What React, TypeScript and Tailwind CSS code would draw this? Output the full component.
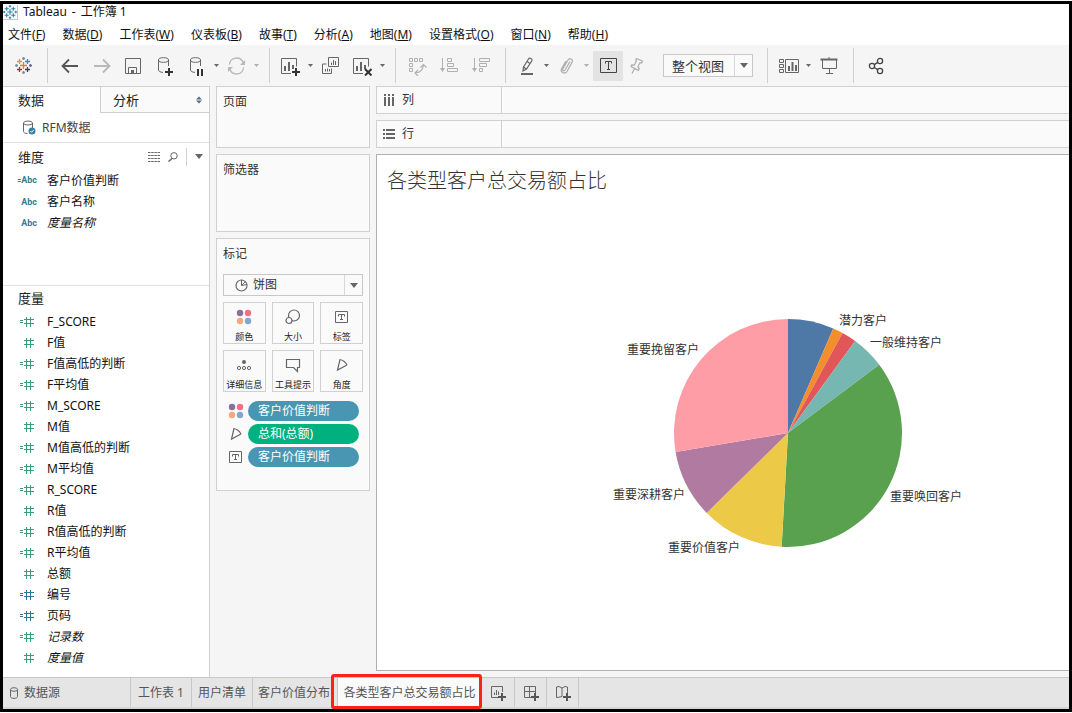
import type { ReactNode } from "react";

const dimensions = [
  { name: "客户价值判断", calculated: true },
  { name: "客户名称" },
  { name: "度量名称", italic: true },
];

const measures = [
  { name: "F_SCORE", calculated: true },
  { name: "F值" },
  { name: "F值高低的判断", calculated: true },
  { name: "F平均值", calculated: true },
  { name: "M_SCORE", calculated: true },
  { name: "M值" },
  { name: "M值高低的判断", calculated: true },
  { name: "M平均值", calculated: true },
  { name: "R_SCORE", calculated: true },
  { name: "R值" },
  { name: "R值高低的判断", calculated: true },
  { name: "R平均值", calculated: true },
  { name: "总额" },
  { name: "编号", calculated: true, discrete: true },
  { name: "页码", calculated: true, discrete: true },
  { name: "记录数", calculated: true, italic: true },
  { name: "度量值", italic: true },
];

const menus = [
  ["文件", "F"],
  ["数据", "D"],
  ["工作表", "W"],
  ["仪表板", "B"],
  ["故事", "T"],
  ["分析", "A"],
  ["地图", "M"],
  ["设置格式", "O"],
  ["窗口", "N"],
  ["帮助", "H"],
];

// start and end are degrees, clockwise from twelve o'clock
const slices = [
  { start: 0, end: 23.4, color: "#4e79a7" },
  { start: 23.4, end: 28.6, color: "#f28e2b" },
  { start: 28.6, end: 36.1, color: "#e15759" },
  { start: 36.1, end: 53.2, color: "#76b7b2" },
  { start: 53.2, end: 183.2, color: "#59a14f" },
  { start: 183.2, end: 225.5, color: "#edc948" },
  { start: 225.5, end: 260.4, color: "#b07aa1" },
  { start: 260.4, end: 360, color: "#ff9da7" },
];

const pieLabels = [
  { text: "潜力客户", x: 231, y: 22 },
  { text: "一般维持客户", x: 262, y: 44 },
  { text: "重要唤回客户", x: 282, y: 198 },
  { text: "重要价值客户", x: 60, y: 249 },
  { text: "重要深耕客户", x: 5, y: 196 },
  { text: "重要挽留客户", x: 19, y: 51 },
];

function slicePath(start: number, end: number) {
  const cx = 180;
  const cy = 130;
  const r = 114;
  const point = (deg: number) => {
    const rad = (deg * Math.PI) / 180;
    return `${cx + r * Math.sin(rad)} ${cy - r * Math.cos(rad)}`;
  };
  const large = end - start > 180 ? 1 : 0;
  return `M${cx} ${cy}L${point(start)}A${r} ${r} 0 ${large} 1 ${point(end)}Z`;
}

function PieChart() {
  return (
    <svg width="360" height="260" viewBox="0 0 360 260" role="img" aria-label="各类型客户总交易额占比">
      {slices.map((s) => (
        <path key={s.color} d={slicePath(s.start, s.end)} fill={s.color} />
      ))}
      {pieLabels.map((l) => (
        <text key={l.text} x={l.x} y={l.y} fontSize="12" fill="#333333">
          {l.text}
        </text>
      ))}
    </svg>
  );
}

/* ---------- icons ---------- */

function Icon({
  children,
  w = 20,
  h = 20,
  color = "#666666",
}: {
  children: ReactNode;
  w?: number;
  h?: number;
  color?: string;
}) {
  return (
    <svg
      width={w}
      height={h}
      viewBox={`0 0 ${w} ${h}`}
      fill="none"
      stroke={color}
      className="shrink-0"
      aria-hidden="true"
    >
      {children}
    </svg>
  );
}

function Logo({ size, mono = false }: { size: number; mono?: boolean }) {
  const marks: [number, number, number, string][] = [
    [8.5, 8.5, 3.5, "#e8762c"],
    [4.5, 4.5, 2.5, "#eb912c"],
    [12.5, 4.5, 2.5, "#4f86a8"],
    [4.5, 12.5, 2.5, "#c72035"],
    [12.5, 12.5, 2.5, "#1f457e"],
    [8.5, 1.5, 1.5, "#6b9aab"],
    [8.5, 15.5, 1.5, "#7d8fb0"],
    [1.5, 8.5, 1.5, "#6b9aab"],
    [15.5, 8.5, 1.5, "#5b6ba5"],
  ];
  return (
    <svg width={size} height={size} viewBox="0 0 17 17" className="shrink-0" aria-hidden="true">
      {marks.map(([x, y, r, color]) => (
        <path
          key={`${x}-${y}`}
          d={`M${x - r} ${y}h${r * 2}M${x} ${y - r}v${r * 2}`}
          stroke={mono ? "#2f7fa8" : color}
          strokeWidth="1.3"
        />
      ))}
    </svg>
  );
}

function Caret({ color = "#666666" }: { color?: string }) {
  return (
    <svg width="8" height="5" viewBox="0 0 8 5" className="shrink-0" aria-hidden="true">
      <path d="M0 0h8L4 5z" fill={color} />
    </svg>
  );
}

function SmallCaret({ color = "#666666" }: { color?: string }) {
  return (
    <svg width="8" height="3" viewBox="0 0 8 3" className="shrink-0" aria-hidden="true">
      <path d="M1 0h5L3.5 3z" fill={color} />
    </svg>
  );
}

function ArrowIcon({ forward = false }: { forward?: boolean }) {
  return (
    <Icon color={forward ? "#b8b8b8" : "#555555"}>
      <path
        d={forward ? "M3 10h15M12 3.5l6.5 6.5-6.5 6.5" : "M19 10H4M10 3.5L3.5 10l6.5 6.5"}
        strokeWidth="1.8"
      />
    </Icon>
  );
}

function SaveIcon() {
  return (
    <Icon>
      <path d="M2.5 2.5h15v15h-15z" />
      <path d="M5.5 17v-5.5h8V17" />
      <path d="M8 14h3v3H8z" fill="#666666" stroke="none" />
    </Icon>
  );
}

function CylinderPaths() {
  return (
    <>
      <ellipse cx="8.5" cy="4" rx="5" ry="2.3" />
      <path d="M3.5 4v10c0 1.3 1.8 2.3 4.5 2.4M13.5 4v6" />
    </>
  );
}

function AddDataIcon() {
  return (
    <Icon>
      <CylinderPaths />
      <path d="M14 12v8M10 16h8" stroke="#333333" strokeWidth="2" />
    </Icon>
  );
}

function PauseDataIcon() {
  return (
    <Icon>
      <CylinderPaths />
      <path d="M11 13v7M15 13v7" stroke="#333333" strokeWidth="2" />
    </Icon>
  );
}

function RefreshIcon() {
  return (
    <Icon color="#b8b8b8">
      <path d="M2.5 8.5a7 7 0 0 1 13.5-2M16.5 11.5a7 7 0 0 1-13.5 2" strokeWidth="1.3" />
      <path d="M18 4v5h-5zM1 16v-5h5z" fill="#b8b8b8" stroke="none" />
    </Icon>
  );
}

function SheetPaths() {
  return (
    <>
      <path d="M10 17.5H.5v-15h15v8" />
      <path d="M4 15v-5M8 15V6M12 13V9" strokeWidth="2" />
    </>
  );
}

function NewSheetIcon() {
  return (
    <Icon>
      <SheetPaths />
      <path d="M15 12v8M11 16h8" stroke="#333333" strokeWidth="2" />
    </Icon>
  );
}

function ClearSheetIcon() {
  return (
    <Icon>
      <SheetPaths />
      <path d="M12 13l6.500 6.500M18.500 13L12 19.500" stroke="#333333" strokeWidth="2" />
    </Icon>
  );
}

function DuplicateIcon() {
  return (
    <Icon>
      <path d="M7.5 1.5h10v9h-10zM5.5 8h-4v9.5h9v-5" />
      <path d="M10.500 9V6.500M12.500 9V4M14.500 9V5M4.500 15.500V13M6.500 15.500v-3M8.500 15.500V13" />
    </Icon>
  );
}

function SwapIcon() {
  return (
    <Icon color="#b0b0b0">
      <path d="M2.5 2.5h3v3h-3zM7.5 2.5h3v3h-3zM12.5 2.5h3v3h-3zM2.5 7.5h3v3h-3zM2.5 12.5h3v3h-3z" />
      <path d="M16.5 9c-.5 5-3 7.500-8 8" strokeWidth="1.2" />
      <path d="M13.5 11.500l3-3 3 3M11 14l-3 3 3 3" strokeWidth="1.2" />
    </Icon>
  );
}

function SortIcon({ descending = false }: { descending?: boolean }) {
  return (
    <Icon color="#b0b0b0">
      <path d="M3.5 2v12" />
      <path d="M1 12h5l-2.5 4z" fill="#b0b0b0" stroke="none" />
      <path
        d={
          descending
            ? "M8.5 2.5h10v3h-10zM8.5 7.5h7v3h-7zM8.5 12.5h3v3h-3z"
            : "M8.5 2.5h4v3h-4zM8.5 7.5h6v3h-6zM8.5 12.5h10v3h-10z"
        }
      />
    </Icon>
  );
}

function PenIcon() {
  return (
    <Icon>
      <path d="M11.5 3c1-1.5 4-.5 3.500 1.500L9.500 13 6 15l.5-4zM6.500 11l3 2M10 5.500l3 2" strokeWidth="1.2" />
      <path d="M4 18h12" strokeWidth="2" />
    </Icon>
  );
}

function ClipIcon() {
  return (
    <Icon color="#b0b0b0">
      <path
        d="M13 5.500L8 14c-1 1.500-3 .5-2.300-1L11 4c1.500-2.500 5.500-.8 4.200 2L10 15.500c-2 3-7.200 1-5.300-3L9 5"
        strokeWidth="1.3"
      />
    </Icon>
  );
}

function PinIcon() {
  return (
    <Icon color="#acacac">
      <path
        d="M9.500 2.500l6 2.500-.8 1.800-1.700-.2-2 4 1.200 2-.8 1.800L4 10.600l.8-1.600 2.400.2 2.300-4.400L8.800 4zM7.600 12.500l-2.600 5"
        strokeWidth="1.2"
      />
    </Icon>
  );
}

function TextMark({ w = 13, h = 12, color = "#666666" }: { w?: number; h?: number; color?: string }) {
  const mid = w / 2;
  return (
    <Icon w={w} h={h} color={color}>
      <path d={`M.5.5h${w - 1}v${h - 1}H.5z`} />
      <path
        d={`M${mid - 3} 5.500V3.500h6v2M${mid} 3.500V${h - 3.5}M${mid - 1.5} ${h - 3.5}h3`}
      />
    </Icon>
  );
}

function ShowCardsIcon() {
  return (
    <Icon w={22}>
      <path d="M1.5 3.5h4v3h-4zM1.5 8.5h4v3h-4zM1.5 13.5h4v3h-4zM7.5 3.5h13v13h-13z" />
      <path d="M11 15v-5M14.500 15V6M18 15V9" strokeWidth="2" />
    </Icon>
  );
}

function PresentIcon() {
  return (
    <Icon>
      <path d="M1.5 3.5h17" strokeWidth="2" />
      <path d="M10 1v2M3.5 4v8.500h14V4M10.500 12.500v5M7 17.500h7" />
    </Icon>
  );
}

function ShareIcon() {
  return (
    <Icon color="#444444">
      <circle cx="6" cy="10" r="2.6" strokeWidth="1.3" />
      <circle cx="14" cy="5" r="2.6" strokeWidth="1.3" />
      <circle cx="14" cy="15" r="2.6" strokeWidth="1.3" />
      <path d="M8.300 8.600l3.400-2.200M8.300 11.500l3.400 2.100" strokeWidth="1.3" />
    </Icon>
  );
}

function ColorDots() {
  return (
    <Icon w={16} h={16}>
      <g stroke="none">
        <circle cx="4" cy="4" r="3.2" fill="#8a7199" />
        <circle cx="12" cy="4" r="3.2" fill="#f97085" />
        <circle cx="4" cy="12" r="3.2" fill="#f5a97c" />
        <circle cx="12" cy="12" r="3.2" fill="#85a6cc" />
      </g>
    </Icon>
  );
}

function SizeIcon() {
  return (
    <Icon w={16} h={16}>
      <circle cx="9" cy="6.500" r="5.5" strokeWidth="1.2" />
      <circle cx="4" cy="11.500" r="3" strokeWidth="1.2" fill="#fafafa" />
    </Icon>
  );
}

function DetailIcon() {
  return (
    <Icon w={16} h={16}>
      <circle cx="8" cy="5" r="2" fill="#666666" stroke="none" />
      <circle cx="3" cy="11" r="1.6" />
      <circle cx="8" cy="11" r="1.6" />
      <circle cx="13" cy="11" r="1.6" />
    </Icon>
  );
}

function TooltipIcon() {
  return (
    <Icon w={16} h={16}>
      <path d="M1.5 2.500h13v8h-2v4l-4-4h-7z" strokeWidth="1.2" />
    </Icon>
  );
}

function AngleIcon() {
  return (
    <Icon w={16} h={16}>
      <path d="M6 2.500L3.500 13l9.500-5M5.500 2.500c3.500.5 6 2.500 7.500 5.500" strokeWidth="1.2" />
    </Icon>
  );
}

function PieIcon() {
  return (
    <Icon w={13} h={13}>
      <circle cx="6.500" cy="6.500" r="5.500" strokeWidth="1.2" />
      <path d="M6.500 6.500V1M6.500 6.500l4-4M6.500 6.500l5.500-1" />
    </Icon>
  );
}

function DataSourceIcon() {
  return (
    <Icon w={14} h={15}>
      <path d="M1.5 3v8.500c0 1 1.500 2 4 2M10.500 3v5" />
      <ellipse cx="6" cy="3" rx="4.500" ry="2" />
      <circle cx="10" cy="11" r="3.500" fill="#3880a0" stroke="none" />
      <path d="M8.300 11l1.300 1.300 2.200-2.500" stroke="#ffffff" />
    </Icon>
  );
}

function HashIcon({ calculated, discrete }: { calculated?: boolean; discrete?: boolean }) {
  return (
    <Icon w={15} h={11} color={discrete ? "#2e7596" : "#3d9b78"}>
      {calculated && <path d="M1 4.500h3M1 6.500h3" />}
      <path d="M7.500 1v10M11.500 1v10M5 3.500h10M5 7.500h10" />
    </Icon>
  );
}

/* ---------- pieces ---------- */

function ToolButton({ label, children }: { label: string; children: ReactNode }) {
  return (
    <button aria-label={label} className="flex h-[30px] w-8 items-center justify-center">
      {children}
    </button>
  );
}

function ToolGroup({ children }: { children: ReactNode }) {
  return (
    <div className="flex h-[35px] items-center border-r border-[#d0d0d0] pr-2 pl-[5px]">
      {children}
    </div>
  );
}

function Toolbar() {
  return (
    <div className="flex h-[41px] items-center bg-[#f5f5f5]">
      <div className="flex h-[35px] w-[45px] items-center border-r border-[#d0d0d0] pl-3">
        <button aria-label="开始页面">
          <Logo size={17} />
        </button>
      </div>
      <ToolGroup>
        <ToolButton label="撤消">
          <ArrowIcon />
        </ToolButton>
        <ToolButton label="重做">
          <ArrowIcon forward />
        </ToolButton>
        <ToolButton label="保存">
          <SaveIcon />
        </ToolButton>
        <ToolButton label="新建数据源">
          <AddDataIcon />
        </ToolButton>
        <ToolButton label="暂停自动更新">
          <PauseDataIcon />
        </ToolButton>
        <SmallCaret />
        <ToolButton label="运行更新">
          <RefreshIcon />
        </ToolButton>
        <SmallCaret color="#b0b0b0" />
      </ToolGroup>
      <ToolGroup>
        <ToolButton label="新建工作表">
          <NewSheetIcon />
        </ToolButton>
        <SmallCaret />
        <ToolButton label="复制">
          <DuplicateIcon />
        </ToolButton>
        <ToolButton label="清除工作表">
          <ClearSheetIcon />
        </ToolButton>
        <SmallCaret />
      </ToolGroup>
      <ToolGroup>
        <ToolButton label="交换行和列">
          <SwapIcon />
        </ToolButton>
        <ToolButton label="升序排序">
          <SortIcon />
        </ToolButton>
        <ToolButton label="降序排序">
          <SortIcon descending />
        </ToolButton>
      </ToolGroup>
      <ToolGroup>
        <ToolButton label="突出显示">
          <PenIcon />
        </ToolButton>
        <SmallCaret />
        <ToolButton label="组成员">
          <ClipIcon />
        </ToolButton>
        <SmallCaret color="#b0b0b0" />
        <button
          aria-label="显示标记标签"
          className="ml-0.5 flex h-[30px] w-[30px] items-center justify-center bg-[#e3e3e3]"
        >
          <TextMark w={17} h={15} color="#444444" />
        </button>
        <button aria-label="固定轴" className="flex h-[30px] w-7 items-center justify-center">
          <PinIcon />
        </button>
        <div className="relative mr-1.5 ml-3 h-[23px] w-[90px] border border-[#c8c8c8] bg-[#fafafa]">
          <select
            aria-label="适合"
            className="h-full w-full appearance-none bg-transparent pl-2 text-[13px] leading-5 text-[#333] outline-none"
          >
            <option>整个视图</option>
          </select>
          <span className="pointer-events-none absolute inset-y-0 right-0 flex w-[18px] items-center justify-center border-l border-[#d8d8d8]">
            <Caret />
          </span>
        </div>
      </ToolGroup>
      <ToolGroup>
        <ToolButton label="显示/隐藏卡">
          <ShowCardsIcon />
        </ToolButton>
        <SmallCaret />
        <ToolButton label="演示模式">
          <PresentIcon />
        </ToolButton>
      </ToolGroup>
      <div className="flex pl-[6px]">
        <ToolButton label="共享">
          <ShareIcon />
        </ToolButton>
      </div>
    </div>
  );
}

function DataPane() {
  return (
    <aside className="flex w-[207px] shrink-0 flex-col border-r border-[#d0d0d0] bg-white">
      <div className="flex h-[27px] text-[13px] text-[#222]">
        <button className="w-[97px] border-t border-[#d0d0d0] pl-[15px] text-left">数据</button>
        <button className="flex flex-1 items-center justify-between border border-r-0 border-[#d0d0d0] bg-[#fafafa] pr-1.5 pl-3">
          分析
          <svg width="8" height="8" viewBox="0 0 8 8" aria-hidden="true">
            <path d="M1 3.500h6L4 .5zM1 4.500h6L4 7.500z" fill="#5b6b7a" />
          </svg>
        </button>
      </div>
      <div className="flex h-[30px] items-center gap-[6px] border-b border-[#e0e0e0] pl-[19px] text-[#444]">
        <DataSourceIcon />
        RFM数据
      </div>

      <section className="flex h-[143px] flex-col border-b border-[#e0e0e0]">
        <div className="flex h-[27px] items-center pr-1.5 pl-[15px]">
          <h2 className="flex-1 text-[13px] text-[#222]">维度</h2>
          <button aria-label="查看数据" className="mr-2">
            <Icon w={12} h={10}>
              <path
                d="M0 .5h12M0 3.500h12M0 6.500h12M0 9.500h12"
                strokeDasharray="2.500 .667"
                strokeWidth="1"
              />
            </Icon>
          </button>
          <button aria-label="查找字段" className="mr-2">
            <Icon w={10} h={10}>
              <circle cx="6" cy="3.800" r="3.200" />
              <path d="M4 6.500L.5 9.500" strokeWidth="1.5" />
            </Icon>
          </button>
          <span className="mr-2 h-[18px] border-l border-[#d0d0d0]" />
          <button aria-label="数据窗格菜单">
            <Caret />
          </button>
        </div>
        <ul>
          {dimensions.map((d) => (
            <li key={d.name} className="flex h-[21px] items-center">
              <span className="w-[34px] text-right font-['Roboto'] text-[9px] font-bold text-[#3a7a90]">
                {d.calculated && <span className="text-[7px]">=</span>}
                Abc
              </span>
              <span className={d.italic ? "ml-2.5 italic" : "ml-2.5"}>{d.name}</span>
            </li>
          ))}
        </ul>
      </section>

      <section className="flex-1">
        <h2 className="h-[25px] pl-[15px] text-[13px] leading-6 text-[#222]">度量</h2>
        <ul>
          {measures.map((m) => (
            <li key={m.name} className="flex h-[21px] items-center pl-4">
              <HashIcon calculated={m.calculated} discrete={m.discrete} />
              <span className={m.italic ? "ml-[13px] italic" : "ml-[13px]"}>{m.name}</span>
            </li>
          ))}
        </ul>
      </section>
    </aside>
  );
}

function MarkButton({ label, children }: { label: string; children: ReactNode }) {
  return (
    <button className="flex h-[42px] flex-col items-center justify-between border border-[#d0d0d0] pt-1.5 text-[9px] leading-3 whitespace-nowrap text-[#222]">
      <span className="flex h-4 items-center">{children}</span>
      {label}
    </button>
  );
}

function MarkPill({ icon, label, green = false }: { icon: ReactNode; label: string; green?: boolean }) {
  return (
    <li className="flex h-5 items-center">
      <span className="flex w-[25px] items-center justify-center">{icon}</span>
      <button
        className={`mr-1 h-5 flex-1 rounded-full pl-[10px] text-left leading-5 text-white ${
          green ? "bg-[#00b180]" : "bg-[#4996b2]"
        }`}
      >
        {label}
      </button>
    </li>
  );
}

function Cards() {
  const card = "border border-[#d0d0d0] bg-[#fafafa] px-[6px] text-[#333]";
  return (
    <div className="flex w-[154px] shrink-0 flex-col gap-1.5 pb-1.5">
      <section className={`h-[62px] ${card}`}>
        <h2 className="leading-[30px]">页面</h2>
      </section>
      <section className={`h-[78px] ${card}`}>
        <h2 className="leading-[30px]">筛选器</h2>
      </section>
      <section className={`${card} pb-[23px]`}>
        <h2 className="mb-[5px] leading-[30px]">标记</h2>
        <div className="relative h-[22px] border border-[#c8c8c8]">
          <span className="pointer-events-none absolute inset-y-0 left-[11px] flex items-center">
            <PieIcon />
          </span>
          <select
            aria-label="标记类型"
            className="h-full w-full appearance-none bg-transparent pl-[29px] leading-5 outline-none"
          >
            <option>饼图</option>
          </select>
          <span className="pointer-events-none absolute inset-y-0 right-0 flex w-[18px] items-center justify-center border-l border-[#d8d8d8]">
            <Caret />
          </span>
        </div>
        <div className="mt-1.5 grid grid-cols-3 gap-1.5">
          <MarkButton label="颜色">
            <ColorDots />
          </MarkButton>
          <MarkButton label="大小">
            <SizeIcon />
          </MarkButton>
          <MarkButton label="标签">
            <TextMark />
          </MarkButton>
          <MarkButton label="详细信息">
            <DetailIcon />
          </MarkButton>
          <MarkButton label="工具提示">
            <TooltipIcon />
          </MarkButton>
          <MarkButton label="角度">
            <AngleIcon />
          </MarkButton>
        </div>
        <ul className="mt-[9px] flex flex-col gap-[3px]">
          <MarkPill icon={<ColorDots />} label="客户价值判断" />
          <MarkPill icon={<AngleIcon />} label="总和(总额)" green />
          <MarkPill icon={<TextMark />} label="客户价值判断" />
        </ul>
      </section>
    </div>
  );
}

function Shelf({ label, icon }: { label: string; icon: ReactNode }) {
  return (
    <div className="flex h-7 border border-r-0 border-[#d0d0d0] bg-[#fafafa] text-[#333]">
      <div className="flex w-[125px] items-center gap-1.5 border-r border-[#d0d0d0] pl-[6px]">
        {icon}
        {label}
      </div>
    </div>
  );
}

function Worksheet() {
  return (
    <main className="flex min-w-0 flex-1 flex-col gap-1.5 pb-1.5">
      <Shelf
        label="列"
        icon={
          <Icon w={13} h={12}>
            <path d="M2 0v2M6 0v2M10 0v2M2 3v9M6 3v9M10 3v9" strokeWidth="2" />
          </Icon>
        }
      />
      <Shelf
        label="行"
        icon={
          <Icon w={13} h={12}>
            <path d="M0 2h2M0 6h2M0 10h2M3 2h9M3 6h9M3 10h9" strokeWidth="2" />
          </Icon>
        }
      />
      <div className="flex flex-1 flex-col border border-r-0 border-[#b0b0b0] bg-white">
        <h1 className="h-[41px] pt-[11px] pl-[10px] text-[20px] leading-[30px] font-light text-[#333]">
          各类型客户总交易额占比
        </h1>
        <div className="flex flex-1 items-center justify-center pl-[130px]">
          <PieChart />
        </div>
      </div>
    </main>
  );
}

function SheetTabs() {
  const tab = "border-r border-[#c8c8c8]";
  return (
    <footer className="flex h-8 border-t border-b-2 border-t-[#c8c8c8] border-b-[#d4d4d4] bg-[#e5e5e5] text-[#555]">
      <button className={`flex w-32 items-center gap-[5px] pl-[6px] ${tab}`}>
        <Icon w={10} h={12}>
          <path d="M1.5 2.500v7c0 2.500 7 2.500 7 0v-7" />
          <ellipse cx="5" cy="2.500" rx="3.500" ry="1.800" />
        </Icon>
        数据源
      </button>
      <button className={`w-[61px] ${tab}`}>工作表 1</button>
      <button className={`w-[61px] ${tab}`}>用户清单</button>
      <button className={`w-[85px] pl-[5px] text-left ${tab}`}>客户价值分布</button>
      <div className="relative flex">
        <button className="w-[143px] bg-[#fafafa]">各类型客户总交易额占比</button>
        <span className="pointer-events-none absolute -top-1 -right-px -bottom-0.5 -left-[7px] rounded-[3px] border-3 border-[#fb2414]" />
      </div>
      <button aria-label="新建工作表" className={`flex w-[34px] items-center justify-center ${tab}`}>
        <Icon w={16} h={16}>
          <path d="M8 12.500H1.500v-11h11V7" />
          <path d="M4.500 10V7.500M6.500 10V5M8.500 10V6.500" />
          <path d="M12 8v8M8 12h8" stroke="#555555" strokeWidth="2" />
        </Icon>
      </button>
      <button aria-label="新建仪表板" className={`flex w-[32px] items-center justify-center ${tab}`}>
        <Icon w={16} h={16}>
          <path d="M8 12.500H1.500v-11h11V8M6.500 1.500v11M1.500 6.500h11" />
          <path d="M12 8v8M8 12h8" stroke="#555555" strokeWidth="2" />
        </Icon>
      </button>
      <button aria-label="新建故事" className={`flex w-[32px] items-center justify-center ${tab}`}>
        <Icon w={16} h={16}>
          <path d="M7 11.500L5 12l-3.500.500V2L4 1.500 7 3l3-1.500 2.500.500V8M7 3v8.500" />
          <path d="M12 8v8M8 12h8" stroke="#555555" strokeWidth="2" />
        </Icon>
      </button>
    </footer>
  );
}

export default function App() {
  return (
    <div className="flex min-h-screen bg-white py-px font-['Noto_Sans','Noto_Sans_CJK_SC',sans-serif] text-[12px] leading-4 text-[#111]">
      <div className="flex min-w-0 flex-1 flex-col border-3 border-black bg-[#f5f5f5]">
        <header className="bg-white">
          <div className="flex h-4 items-center gap-[5px]">
            <span className="border-r border-b border-[#c8c8c8]">
              <Logo size={14} mono />
            </span>
            <span>Tableau</span>
            <span>-</span>
            <span>工作簿 1</span>
          </div>
          <nav className="flex h-[25px] items-center gap-[17px] pt-1 pl-[5px]">
            {menus.map(([name, key]) => (
              <button key={key}>
                {name}(<span className="underline">{key}</span>)
              </button>
            ))}
          </nav>
        </header>
        <Toolbar />
        <div className="flex flex-1 gap-1.5">
          <DataPane />
          <Cards />
          <Worksheet />
        </div>
        <SheetTabs />
      </div>
    </div>
  );
}
